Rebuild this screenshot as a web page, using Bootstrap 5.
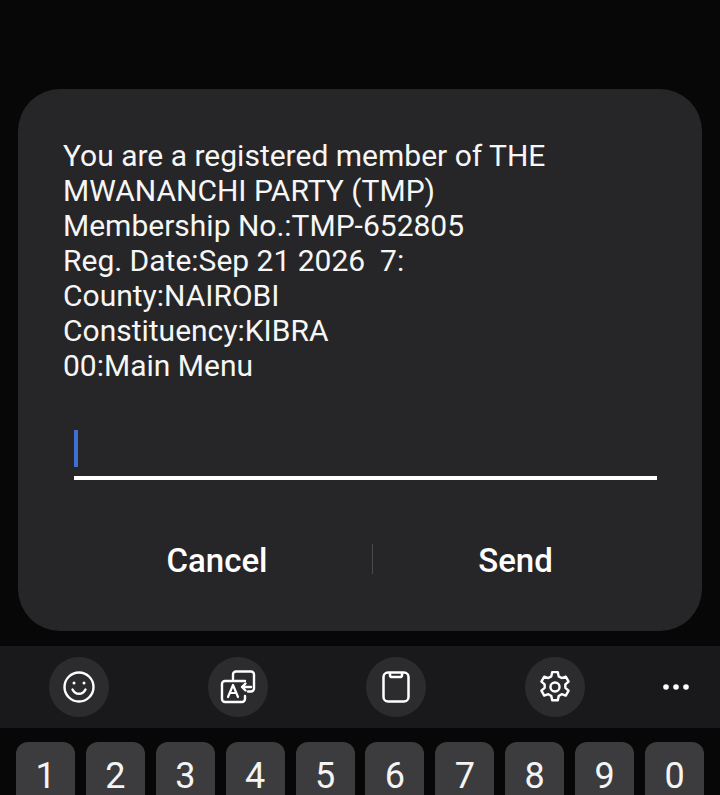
<!DOCTYPE html>
<html lang="en">
<head>
<meta charset="utf-8">
<title>USSD dialog</title>
<link href="https://cdn.jsdelivr.net/npm/bootstrap@5.3.0/dist/css/bootstrap.min.css" rel="stylesheet">
<style>
html,body{height:795px;overflow:hidden;background:#070708;}
body{font-family:Roboto,"Liberation Sans",sans-serif;color:#fff;}
.scene{height:795px;overflow:hidden;}
.dialog-box{margin:89px 18px 0;height:542px;background:#262628;border-radius:42px;padding:49px 45px 0 45px;}
.msg{font-size:30px;line-height:35px;white-space:pre;color:#f6f6f6;}
.entry{margin:47px 0 0 11px;height:50px;border-bottom:4px solid #fff;}
.caret-bar{width:4px;height:37px;background:#3f6fd0;}
.actions{margin:49px -45px 0;height:60px;}
.act{font-size:33px;font-weight:500;color:#fff;background:none;border:0;padding:0;height:60px;line-height:64px;}
.act-a{flex:0 0 354px;padding-left:44px;}
.act-b{flex:1 1 0;padding-right:44px;}
.sep{width:1px;height:30px;background:#4a4a4c;flex:none;}
.tools{margin-top:15px;height:82px;background:#19191b;padding:0 0 0 49px;}
.tool{width:60px;height:60px;border-radius:50%;background:#2c2c2e;flex:none;}
.gap-a{margin-left:99px;}
.gap-b{margin-left:98px;}
.gap-c{margin-left:99px;}
.gap-d{margin-left:77px;}
.dots{width:28px;height:60px;flex:none;}
.keys{margin-top:14px;padding-left:16px;gap:10.9px;}
.keycap{width:59px;height:70px;flex:none;background:#3c3c3e;border-radius:12px 12px 0 0;font-size:36px;line-height:68px;text-align:center;color:#f4f4f4;font-weight:400;}
</style>
</head>
<body>
<div class="scene">
  <div class="dialog-box">
    <div class="msg">You are a registered member of THE
MWANANCHI PARTY (TMP)
Membership No.:TMP-652805
Reg. Date:Sep 21 2026  7:
County:NAIROBI
Constituency:KIBRA
00:Main Menu</div>
    <div class="entry"><div class="caret-bar"></div></div>
    <div class="actions d-flex align-items-center">
      <button class="act act-a" type="button">Cancel</button>
      <div class="sep"></div>
      <button class="act act-b" type="button">Send</button>
    </div>
  </div>
  <div class="tools d-flex align-items-center">
    <div class="tool d-flex align-items-center justify-content-center">
      <svg width="32" height="32" viewBox="0 0 32 32" fill="none" stroke="#fff" stroke-width="2.4" stroke-linecap="round"><circle cx="16" cy="16" r="14.5"/><path d="M9.5 18.5c1.5 3 3.7 4.3 6.5 4.3s5-1.300 6.500-4.300"/><circle cx="11" cy="12" r="1.500" fill="#fff" stroke="none"/><circle cx="21" cy="12" r="1.500" fill="#fff" stroke="none"/></svg>
    </div>
    <div class="tool gap-a d-flex align-items-center justify-content-center">
      <svg width="36" height="34" viewBox="0 0 36 34" fill="none" stroke="#fff" stroke-width="2.400" stroke-linecap="round" stroke-linejoin="round"><path d="M13 9V4.500A3 3 0 0 1 16 1.500h15A3 3 0 0 1 34 4.500v14a3 3 0 0 1-3 3h-3"/><path d="M25 11H5a3 3 0 0 0-3 3v15a3 3 0 0 0 3 3h17a3 3 0 0 0 3-3v-3"/><path d="M31 17h-9M25.500 13.500 22 17l3.500 3.500"/><path d="M8 27l5-12 5 12M9.800 23h6.400" stroke-width="2.200"/></svg>
    </div>
    <div class="tool gap-b d-flex align-items-center justify-content-center">
      <svg width="28" height="32" viewBox="0 0 28 32" fill="none" stroke="#fff" stroke-width="2.500" stroke-linejoin="round"><rect x="1.500" y="1.500" width="25" height="29" rx="4.500"/><path d="M8 1.500v2.800A1.700 1.700 0 0 0 9.700 6h8.600A1.700 1.700 0 0 0 20 4.300V1.500"/></svg>
    </div>
    <div class="tool gap-c d-flex align-items-center justify-content-center">
      <svg width="34" height="34" viewBox="0 0 24 24" fill="none" stroke="#fff" stroke-width="1.700" stroke-linejoin="round"><circle cx="12" cy="12" r="3.200"/><path d="M10 1.500h4l.6 3 2.100 1.200 2.900-1 2 3.500-2.300 2v2.400l2.300 2-2 3.500-2.900-1-2.100 1.200-.6 3h-4l-.6-3-2.100-1.200-2.900 1-2-3.500 2.300-2v-2.400l-2.300-2 2-3.500 2.900 1 2.100-1.200z"/></svg>
    </div>
    <div class="dots gap-d d-flex align-items-center justify-content-center">
      <svg width="28" height="8" viewBox="0 0 28 8" fill="#fff"><circle cx="4" cy="4" r="2.800"/><circle cx="14" cy="4" r="2.800"/><circle cx="24" cy="4" r="2.800"/></svg>
    </div>
  </div>
  <div class="keys d-flex">
    <div class="keycap">1</div><div class="keycap">2</div><div class="keycap">3</div><div class="keycap">4</div><div class="keycap">5</div><div class="keycap">6</div><div class="keycap">7</div><div class="keycap">8</div><div class="keycap">9</div><div class="keycap">0</div>
  </div>
</div>
<script src="https://cdn.jsdelivr.net/npm/bootstrap@5.3.0/dist/js/bootstrap.bundle.min.js"></script>
</body>
</html>
